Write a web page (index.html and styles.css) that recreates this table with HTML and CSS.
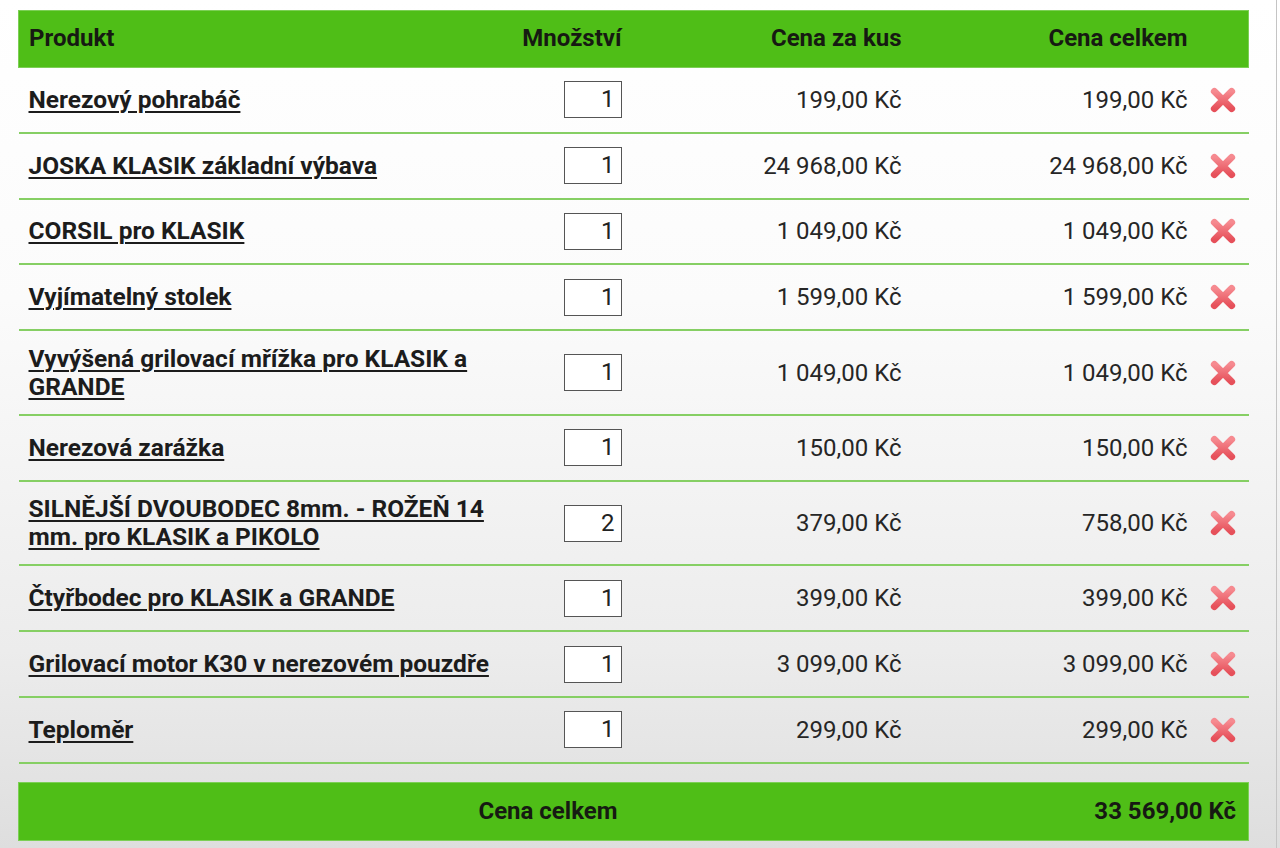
FILE: index.html
```html
<!DOCTYPE html>
<html lang="cs">
<head>
<meta charset="utf-8">
<title>Košík</title>
<link rel="stylesheet" href="styles.css">
</head>
<body>
<div class="page">
  <table class="cart">
    <colgroup>
      <col class="c-prod"><col class="c-qty"><col class="c-unit"><col class="c-total"><col class="c-del">
    </colgroup>
    <thead>
      <tr>
        <th class="left">Produkt</th>
        <th class="right">Množství</th>
        <th class="right">Cena za kus</th>
        <th class="right">Cena celkem</th>
        <th></th>
      </tr>
    </thead>
    <tbody>
      <tr><td class="name"><a href="#">Nerezový pohrabáč</a></td><td class="qty"><span class="box">1</span></td><td class="price">199,00 Kč</td><td class="price">199,00 Kč</td><td class="del"><svg class="x" viewBox="0 0 26 26"><use href="#xi"/></svg></td></tr>
      <tr><td class="name"><a href="#">JOSKA KLASIK základní výbava</a></td><td class="qty"><span class="box">1</span></td><td class="price">24 968,00 Kč</td><td class="price">24 968,00 Kč</td><td class="del"><svg class="x" viewBox="0 0 26 26"><use href="#xi"/></svg></td></tr>
      <tr><td class="name"><a href="#">CORSIL pro KLASIK</a></td><td class="qty"><span class="box">1</span></td><td class="price">1 049,00 Kč</td><td class="price">1 049,00 Kč</td><td class="del"><svg class="x" viewBox="0 0 26 26"><use href="#xi"/></svg></td></tr>
      <tr><td class="name"><a href="#">Vyjímatelný stolek</a></td><td class="qty"><span class="box">1</span></td><td class="price">1 599,00 Kč</td><td class="price">1 599,00 Kč</td><td class="del"><svg class="x" viewBox="0 0 26 26"><use href="#xi"/></svg></td></tr>
      <tr><td class="name"><a href="#">Vyvýšená grilovací mřížka pro KLASIK a GRANDE</a></td><td class="qty"><span class="box">1</span></td><td class="price">1 049,00 Kč</td><td class="price">1 049,00 Kč</td><td class="del"><svg class="x" viewBox="0 0 26 26"><use href="#xi"/></svg></td></tr>
      <tr><td class="name"><a href="#">Nerezová zarážka</a></td><td class="qty"><span class="box">1</span></td><td class="price">150,00 Kč</td><td class="price">150,00 Kč</td><td class="del"><svg class="x" viewBox="0 0 26 26"><use href="#xi"/></svg></td></tr>
      <tr><td class="name"><a href="#">SILNĚJŠÍ DVOUBODEC 8mm. - ROŽEŇ 14 mm. pro KLASIK a PIKOLO</a></td><td class="qty"><span class="box">2</span></td><td class="price">379,00 Kč</td><td class="price">758,00 Kč</td><td class="del"><svg class="x" viewBox="0 0 26 26"><use href="#xi"/></svg></td></tr>
      <tr><td class="name"><a href="#">Čtyřbodec pro KLASIK a GRANDE</a></td><td class="qty"><span class="box">1</span></td><td class="price">399,00 Kč</td><td class="price">399,00 Kč</td><td class="del"><svg class="x" viewBox="0 0 26 26"><use href="#xi"/></svg></td></tr>
      <tr><td class="name"><a href="#">Grilovací motor K30 v nerezovém pouzdře</a></td><td class="qty"><span class="box">1</span></td><td class="price">3 099,00 Kč</td><td class="price">3 099,00 Kč</td><td class="del"><svg class="x" viewBox="0 0 26 26"><use href="#xi"/></svg></td></tr>
      <tr><td class="name"><a href="#">Teploměr</a></td><td class="qty"><span class="box">1</span></td><td class="price">299,00 Kč</td><td class="price">299,00 Kč</td><td class="del"><svg class="x" viewBox="0 0 26 26"><use href="#xi"/></svg></td></tr>
    </tbody>
  </table>
  <table class="sum">
    <colgroup>
      <col class="c-prod"><col class="c-qty"><col class="c-unit"><col class="c-total"><col class="c-del">
    </colgroup>
    <tr>
      <td colspan="2" class="sum-label">Cena celkem</td>
      <td colspan="3" class="sum-value">33 569,00 Kč</td>
    </tr>
  </table>
</div>
<svg width="0" height="0" class="defs">
  <defs>
    <linearGradient id="xg" x1="0" y1="0" x2="0" y2="1">
      <stop offset="0" stop-color="#f68a90"/>
      <stop offset="1" stop-color="#e6505a"/>
    </linearGradient>
    <symbol id="xi" viewBox="0 0 26 26">
      <path d="M5 5 L21 21 M21 5 L5 21" stroke="url(#xg)" stroke-width="6.5" stroke-linecap="round" fill="none"/>
    </symbol>
  </defs>
</svg>
</body>
</html>
```

FILE: styles.css
```css
html, body {
  margin: 0;
  padding: 0;
}
body {
  width: 1280px;
  height: 848px;
  overflow: hidden;
  font-family: Roboto, "Liberation Sans", Arial, sans-serif;
  color: #222;
  background: linear-gradient(to bottom, #ffffff 0px, #fbfbfb 300px, #ececec 650px, #dedede 848px);
}
.page {
  width: 1277px;
  height: 848px;
  box-sizing: border-box;
  border-right: 1px solid #c4c4c4;
  padding: 10px 0 0 18px;
}
table {
  border-collapse: collapse;
  table-layout: fixed;
  width: 1230px;
}
.c-prod { width: 490px; }
.c-qty { width: 123px; }
.c-unit { width: 280px; }
.c-total { width: 286px; }
.c-del { width: 51px; }

.cart thead tr {
  background: #4fbe17;
}
.cart th {
  height: 57px;
  padding: 0 10px 2px;
  font-size: 24px;
  font-weight: 700;
  color: #161a12;
  border: 1px solid #7ccf55;
  border-left: none;
  border-right: none;
  box-sizing: border-box;
}
.cart th:first-child { border-left: 1px solid #7ccf55; padding-left: 10px; }
.cart th:last-child { border-right: 1px solid #7ccf55; }
.left { text-align: left; }
.right { text-align: right; }

.cart td {
  padding: 13.4px 10px;
  border-bottom: 2px solid #86cf64;
  font-size: 24px;
  line-height: 28px;
  vertical-align: middle;
}
.name a {
  color: #1c1c1c;
  font-weight: 700;
  font-size: 24.5px;
  text-decoration: underline;
  text-decoration-thickness: 2px;
  text-underline-offset: 3px;
}
.qty {
  text-align: right;
}
.box {
  display: inline-block;
  box-sizing: border-box;
  width: 58px;
  height: 37px;
  border: 1px solid #555;
  background: #fff;
  text-align: right;
  padding-right: 6px;
  line-height: 35px;
  font-size: 24px;
  color: #222;
  vertical-align: middle;
}
.price {
  text-align: right;
  color: #262626;
}
.cart td.del {
  padding: 0;
  text-align: center;
}
.x {
  width: 28px;
  height: 28px;
  display: block;
  margin: 0 auto 0 11px;
}
.defs {
  position: absolute;
}

.sum {
  margin-top: 18px;
}
.sum tr {
  background: #4fbe17;
}
.sum td {
  height: 58px;
  box-sizing: border-box;
  font-size: 24px;
  font-weight: 700;
  color: #161a12;
  text-align: right;
  border-top: 1px solid #7ccf55;
  border-bottom: 1px solid #7ccf55;
}
.sum-label {
  padding-right: 14px;
  border-left: 1px solid #7ccf55;
}
.sum-value {
  padding-right: 12px;
  border-right: 1px solid #7ccf55;
}
```
